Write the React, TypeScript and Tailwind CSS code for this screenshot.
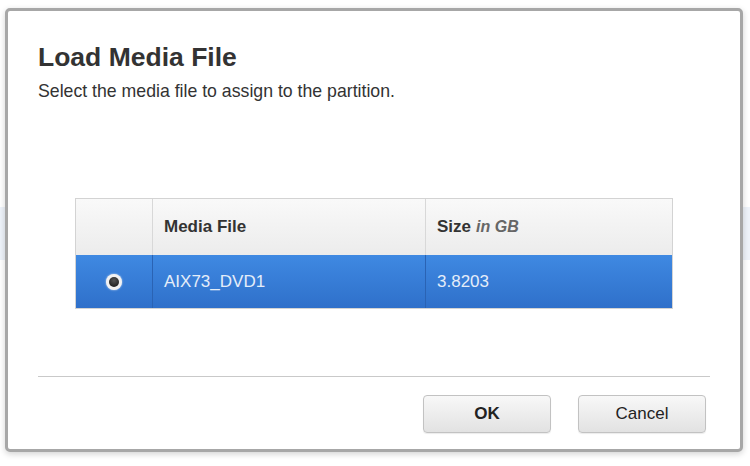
export default function App() {
  return (
    <div className="relative h-[466px] w-[750px] overflow-hidden bg-white font-['Liberation_Sans',Arial,sans-serif]">
      {/* page behind the modal */}
      <div className="absolute inset-x-0 top-[207px] h-[53px] bg-[#eef3fa]" />

      <div className="absolute left-[5px] top-[8px] flex h-[444px] w-[738px] flex-col rounded-[5px] border-[3px] border-[#a7a7a7] bg-white px-[30px] pt-[31px] shadow-[0_2px_6px_rgba(0,0,0,0.18)]">
        <h1 className="text-[26.5px] font-bold leading-[30px] text-[#333]">Load Media File</h1>
        <p className="mt-[8px] text-[17.7px] leading-[22px] text-[#333]">
          Select the media file to assign to the partition.
        </p>

        <div className="mx-auto mt-[96px] w-[598px] border border-[#d3d3d3]">
          <div className="grid h-[56px] grid-cols-[77px_273px_1fr] bg-gradient-to-b from-[#f9f9f9] to-[#ececec] text-[17px] font-bold text-[#333]">
            <div className="border-r border-[#d8d8d8]" />
            <div className="flex items-center border-r border-[#d8d8d8] px-[11px]">Media File</div>
            <div className="flex items-center px-[11px]">
              Size<span className="ml-[5px] text-[16px] italic text-[#666]">in GB</span>
            </div>
          </div>
          <div className="grid h-[53px] grid-cols-[77px_273px_1fr] bg-gradient-to-b from-[#3f89e2] to-[#2f70ca] text-[17px] text-[#e4edf9]">
            <div className="flex items-center justify-center border-r border-[#2a63b4]">
              <span className="flex h-[16px] w-[16px] items-center justify-center rounded-full bg-[#f2f2f2] shadow-[0_0_2px_rgba(255,255,255,0.8)]">
                <span className="h-[10px] w-[10px] rounded-full bg-[radial-gradient(circle_at_50%_35%,#555,#111)]" />
              </span>
            </div>
            <div className="flex items-center border-r border-[#2a63b4] px-[11px]">AIX73_DVD1</div>
            <div className="flex items-center px-[11px]">3.8203</div>
          </div>
        </div>

        <div className="mt-[67px] h-px bg-[#c9c9c9]" />

        <div className="mt-[18px] flex justify-end gap-[27px] pr-[4px]">
          <button className="h-[38px] w-[128px] rounded-[4px] border border-[#c2c2c2] bg-gradient-to-b from-[#f8f8f8] to-[#e2e2e2] text-[17px] font-bold text-[#222] shadow-[0_1px_1px_rgba(0,0,0,0.08)]">
            OK
          </button>
          <button className="h-[38px] w-[128px] rounded-[4px] border border-[#c2c2c2] bg-gradient-to-b from-[#f8f8f8] to-[#e2e2e2] text-[17px] text-[#222] shadow-[0_1px_1px_rgba(0,0,0,0.08)]">
            Cancel
          </button>
        </div>
      </div>
    </div>
  );
}
